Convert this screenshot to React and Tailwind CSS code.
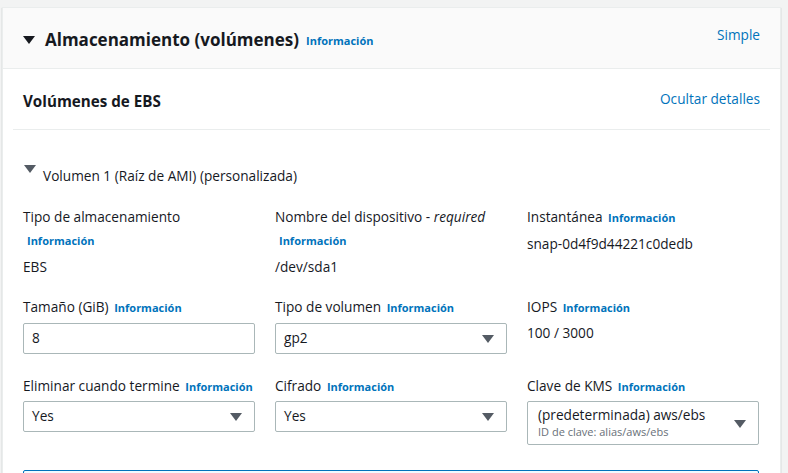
import { useState } from 'react'

const font = { fontFamily: '"Open Sans", "Noto Sans", Arial, sans-serif' }

const Info = ({ className = '' }) => (
  <a className={`text-[11px] font-bold text-[#0073bb] ${className}`}>Información</a>
)

const Caret = ({ className = '' }) => (
  <svg viewBox="0 0 12 8" className={`h-[8px] w-[12px] ${className}`}>
    <path d="M0 0h12L6 8z" fill="currentColor" />
  </svg>
)

const Select = ({ value }) => (
  <div className="flex h-[31px] items-center justify-between rounded-[2px] border border-[#aab7b8] bg-white pl-[8px] pr-[12px] text-[#16191f]">
    <span>{value}</span>
    <Caret className="text-[#545b64]" />
  </div>
)

export default function App() {
  const [open] = useState(true)

  return (
    <div className="min-h-screen bg-[#f2f3f3] pl-[2px] pr-[7px] pt-[7px]" style={font}>
      <div className="border border-[#eaeded] bg-white shadow-[0_1px_1px_0_rgba(0,28,36,0.3)]">
        <div className="flex h-[61px] items-start justify-between border-b border-[#eaeded] bg-[#fafafa] pl-[20px] pr-[20px] pt-[17px]">
          <div className="flex items-center leading-[26px]">
            <Caret className="mr-[10px] h-[8px] w-[11px] text-[#16191f]" />
            <h2 className="text-[17px] font-bold text-[#16191f]">Almacenamiento (volúmenes)</h2>
            <Info className="ml-[7px] mt-[3px]" />
          </div>
          <a className="text-[13.65px] leading-[20px] text-[#0073bb]">Simple</a>
        </div>

        <div className="px-[10px]">
          <div className="flex h-[61px] items-center justify-between border-b border-[#eaeded] px-[10px]">
            <h3 className="pt-[4px] text-[15.2px] font-bold text-[#16191f]">Volúmenes de EBS</h3>
            <a className="text-[13.65px] text-[#0073bb]">Ocultar detalles</a>
          </div>

          <div className="px-[10px] pb-[8px] text-[13.65px] text-[#16191f]">
            <div className="flex items-start pt-[34px]">
              <Caret className="ml-[1px] mr-[7px] mt-[1px] h-[7px] w-[10px] text-[#545b64]" />
              <span className="mt-[2px] leading-[20px]">Volumen 1 (Raíz de AMI) (personalizada)</span>
            </div>

            {open && (
              <div className="grid grid-cols-[232px_232px_232px] gap-x-[20px] pt-[21px]">
                <div>
                  <div className="leading-[20px]">Tipo de almacenamiento</div>
                  <div className="pl-[4px] leading-[26px]"><Info /></div>
                  <div className="mt-[3px] leading-[20px]">EBS</div>
                </div>
                <div>
                  <div className="leading-[20px]">Nombre del dispositivo - <i>required</i></div>
                  <div className="pl-[4px] leading-[26px]"><Info /></div>
                  <div className="mt-[3px] leading-[20px]">/dev/sda1</div>
                </div>
                <div>
                  <div className="leading-[20px]">Instantánea <Info className="ml-[2px]" /></div>
                  <div className="mt-[6px] leading-[20px]">snap-0d4f9d44221c0dedb</div>
                </div>

                <div className="mt-[20px]">
                  <div className="mb-[5px] leading-[20px]">Tamaño (GiB) <Info className="ml-[2px]" /></div>
                  <div className="flex h-[31px] items-center rounded-[2px] border border-[#aab7b8] bg-white px-[8px]">8</div>
                </div>
                <div className="mt-[20px]">
                  <div className="mb-[5px] leading-[20px]">Tipo de volumen <Info className="ml-[2px]" /></div>
                  <Select value="gp2" />
                </div>
                <div className="mt-[20px]">
                  <div className="leading-[20px]">IOPS <Info className="ml-[2px]" /></div>
                  <div className="mt-[5px] leading-[20px]">100 / 3000</div>
                </div>

                <div className="mt-[22px]">
                  <div className="mb-[4px] leading-[20px]">Eliminar cuando termine <Info className="ml-[2px]" /></div>
                  <Select value="Yes" />
                </div>
                <div className="mt-[22px]">
                  <div className="mb-[4px] leading-[20px]">Cifrado <Info className="ml-[2px]" /></div>
                  <Select value="Yes" />
                </div>
                <div className="mt-[22px]">
                  <div className="mb-[4px] leading-[20px]">Clave de KMS <Info className="ml-[2px]" /></div>
                  <div className="flex h-[44px] items-center justify-between rounded-[2px] border border-[#aab7b8] bg-white pl-[10px] pr-[12px]">
                    <div className="flex flex-col">
                      <span className="leading-[18px]">(predeterminada) aws/ebs</span>
                      <span className="text-[11px] leading-[16px] text-[#687078]">ID de clave: alias/aws/ebs</span>
                    </div>
                    <Caret className="mt-[2px] text-[#545b64]" />
                  </div>
                </div>

                <div className="col-span-3 mt-[25px] h-[40px] rounded-[2px] border border-[#0073bb] bg-[#f1faff]" />
              </div>
            )}
          </div>
        </div>
      </div>
    </div>
  )
}
